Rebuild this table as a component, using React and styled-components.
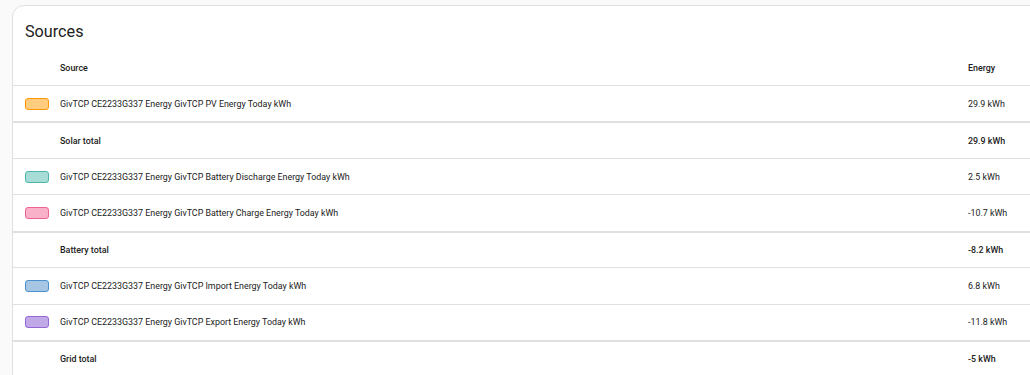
import React from "react";
import styled, { createGlobalStyle } from "styled-components";

const Global = createGlobalStyle`
  html, body { margin: 0; padding: 0; background: #fafafa; overflow: hidden; }
  body { font-family: Roboto, "Noto Sans", sans-serif; color: #212121; }
`;

const Page = styled.div`
  padding: 5px 0 0 12px;
  height: 375px;
  box-sizing: border-box;
  overflow: hidden;
`;

const Card = styled.section`
  box-sizing: border-box;
  width: 1040px;
  height: 380px;
  background: #fff;
  border: 1px solid #e0e0e0;
  border-radius: 12px;
`;

const Title = styled.h1`
  margin: 0;
  padding: 16px 0 0 12px;
  font-size: 16.2px;
  line-height: 20px;
  font-weight: 400;
  color: #212121;
`;

const cols = `
  display: grid;
  grid-template-columns: 24px 897px auto;
  column-gap: 11px;
  padding-left: 12px;
  align-items: center;
`;

const HeadRow = styled.div`
  ${cols}
  box-sizing: border-box;
  height: 43px;
  align-items: end;
  padding-bottom: 12px;
  font-size: 8.9px;
  line-height: 10px;
  font-weight: 500;
  color: #212121;
`;

const Row = styled.div`
  ${cols}
  box-sizing: border-box;
  height: 36.43px;
  border-top: ${(p) => (p.$total ? 2 : 1)}px solid #e0e0e0;
  font-size: 8.9px;
  line-height: 10px;
  font-weight: ${(p) => (p.$total ? 500 : 400)};
  color: #212121;
`;

const Swatch = styled.span`
  box-sizing: border-box;
  display: block;
  width: 24px;
  height: 12px;
  border-radius: 3px;
  border: 1px solid ${(p) => p.$border};
  background: ${(p) => p.$fill};
`;

const Cell = styled.span`
  white-space: nowrap;
`;

const rows = [
  { name: "GivTCP CE2233G337 Energy GivTCP PV Energy Today kWh", value: "29.9 kWh", fill: "#ffcc80", border: "#ff9800" },
  { name: "Solar total", value: "29.9 kWh", total: true },
  { name: "GivTCP CE2233G337 Energy GivTCP Battery Discharge Energy Today kWh", value: "2.5 kWh", fill: "#a7ddd6", border: "#4db6ac" },
  { name: "GivTCP CE2233G337 Energy GivTCP Battery Charge Energy Today kWh", value: "-10.7 kWh", fill: "#f8b1c9", border: "#f06292" },
  { name: "Battery total", value: "-8.2 kWh", total: true },
  { name: "GivTCP CE2233G337 Energy GivTCP Import Energy Today kWh", value: "6.8 kWh", fill: "#a6c6e4", border: "#4a90cf" },
  { name: "GivTCP CE2233G337 Energy GivTCP Export Energy Today kWh", value: "-11.8 kWh", fill: "#c1a9e8", border: "#9466d6" },
  { name: "Grid total", value: "-5 kWh", total: true },
];

export default function App() {
  return (
    <Page>
      <Global />
      <Card>
        <Title>Sources</Title>
        <HeadRow>
          <span />
          <Cell>Source</Cell>
          <Cell>Energy</Cell>
        </HeadRow>
        {rows.map((r, i) => (
          <Row key={i} $total={r.total}>
            {r.fill ? <Swatch $fill={r.fill} $border={r.border} /> : <span />}
            <Cell>{r.name}</Cell>
            <Cell>{r.value}</Cell>
          </Row>
        ))}
      </Card>
    </Page>
  );
}
